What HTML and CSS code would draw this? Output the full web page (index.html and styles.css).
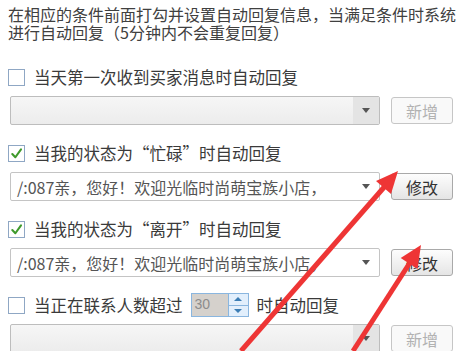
FILE: index.html
```html
<!DOCTYPE html>
<html lang="zh-CN">
<head>
  <meta charset="UTF-8">
  <title>自动回复设置</title>
  <link rel="stylesheet" href="styles.css">
</head>
<body>
  <div class="panel">
    <div class="intro">
      <span class="line">在相应的条件前面打勾并设置自动回复信息，当满足条件时系统</span>
      <span class="line">进行自动回复（5分钟内不会重复回复）</span>
    </div>

    <div class="rule">
      <label class="check-row"><span class="box"></span>当天第一次收到买家消息时自动回复</label>
      <div class="combo-row">
        <div class="combo empty"><span class="text"></span><span class="drop"><i></i></span></div>
        <button class="btn disabled">新增</button>
      </div>
    </div>

    <div class="rule">
      <label class="check-row"><span class="box checked"><svg viewBox="0 0 16 16"><path d="M3.5 8.5 L6.8 12 L12.8 3.6" /></svg></span>当我的状态为“忙碌”时自动回复</label>
      <div class="combo-row">
        <div class="combo"><span class="text">/:087亲，您好！欢迎光临时尚萌宝族小店，</span><span class="drop"><i></i></span></div>
        <button class="btn">修改</button>
      </div>
    </div>

    <div class="rule">
      <label class="check-row"><span class="box checked"><svg viewBox="0 0 16 16"><path d="M3.5 8.5 L6.8 12 L12.8 3.6" /></svg></span>当我的状态为“离开”时自动回复</label>
      <div class="combo-row">
        <div class="combo"><span class="text">/:087亲，您好！欢迎光临时尚萌宝族小店，</span><span class="drop"><i></i></span></div>
        <button class="btn">修改</button>
      </div>
    </div>

    <div class="rule">
      <label class="check-row"><span class="box"></span>当正在联系人数超过
        <span class="spin"><span class="spin-value">30</span><span class="spin-btns"><b class="up"></b><b class="down"></b></span></span>
        时自动回复</label>
      <div class="combo-row">
        <div class="combo empty"><span class="text"></span><span class="drop"><i></i></span></div>
        <button class="btn disabled">新增</button>
      </div>
    </div>
  </div>

  <!-- red annotation arrows drawn over the dialog -->
  <svg class="marks" width="457" height="351" viewBox="0 0 457 351">
    <line x1="241" y1="351" x2="386" y2="185" />
    <polygon points="398,171 391,194 376,181" />
    <line x1="353" y1="351" x2="411" y2="261" />
    <polygon points="421,245 417.5,269 400.7,258" />
  </svg>
</body>
</html>
```

FILE: styles.css
```css
body {
  margin: 0;
  background: #fff;
  font-family: "Noto Sans CJK SC", "Microsoft YaHei", sans-serif;
  color: #3a3a3a;
  overflow: hidden;
  position: relative;
  width: 457px;
  height: 351px;
}

.panel {
  padding: 5px 0 0 8px;
}

.intro {
  font-size: 16px;
  color: #404040;
  white-space: nowrap;
}

.intro .line {
  display: block;
  height: 18px;
  line-height: 18px;
}

.rule {
  margin-top: 18px;
}

.intro + .rule {
  margin-top: 26px;
}

.check-row {
  display: flex;
  align-items: center;
  height: 20px;
  font-size: 16.5px;
  white-space: nowrap;
}

.box {
  width: 15px;
  height: 15px;
  border: 1px solid #8fa7c4;
  background: #fff;
  margin-right: 9px;
  flex: none;
  display: flex;
}

.box svg {
  width: 15px;
  height: 15px;
}

.box svg path {
  fill: none;
  stroke: #3f9a2c;
  stroke-width: 2.2;
  stroke-linecap: round;
  stroke-linejoin: round;
}

.spin {
  display: flex;
  height: 22px;
  margin: 0 8px 0 8px;
  border: 1px solid #8ab6df;
}

.spin-value {
  width: 33px;
  background: #d5d1cc;
  color: #8c8c8c;
  font-family: "Liberation Sans", sans-serif;
  font-size: 14px;
  line-height: 20px;
  padding-left: 3px;
}

.spin-btns {
  width: 19px;
  display: flex;
  flex-direction: column;
  border-left: 1px solid #8ab6df;
}

.spin-btns b {
  flex: 1;
  background: #e2effc;
  display: flex;
  align-items: center;
  justify-content: center;
}

.spin-btns b + b {
  border-top: 1px solid #8ab6df;
}

.spin-btns .up::before,
.spin-btns .down::before {
  content: "";
  border-left: 4px solid transparent;
  border-right: 4px solid transparent;
}

.spin-btns .up::before {
  border-bottom: 4px solid #3b7db4;
}

.spin-btns .down::before {
  border-top: 4px solid #3b7db4;
}

.combo-row {
  display: flex;
  align-items: center;
  margin-top: 9px;
  padding-left: 2px;
}

.combo {
  width: 368px;
  height: 27px;
  border: 1px solid #c4c4c4;
  border-radius: 2px;
  background: #fff;
  display: flex;
  align-items: center;
}

.combo.empty {
  background: linear-gradient(#f6f6f6, #ececec);
  border-color: #bdbdbd;
}

.combo .text {
  flex: 1;
  padding-left: 6px;
  font-size: 16px;
  color: #555;
  white-space: nowrap;
  overflow: hidden;
}

.drop {
  width: 26px;
  height: 100%;
  display: flex;
  align-items: center;
  justify-content: center;
}

.combo.empty .drop {
  background: #e4e4e4;
}

.drop i {
  border-left: 4.5px solid transparent;
  border-right: 4.5px solid transparent;
  border-top: 5px solid #555;
}

.btn {
  margin-left: 11px;
  width: 62px;
  height: 27px;
  border: 1px solid #a9a9a9;
  border-radius: 3px;
  background: linear-gradient(#fdfdfd, #e5e5e5);
  font-family: inherit;
  font-size: 16px;
  color: #333;
  padding: 0;
}

.btn.disabled {
  border-color: #c6c6c6;
  background: #f9f9f9;
  color: #b2b2b2;
}

.marks {
  position: absolute;
  left: 0;
  top: 0;
  pointer-events: none;
}

.marks line {
  stroke: #ee3535;
  stroke-width: 5;
}

.marks polygon {
  fill: #ee3535;
}
```
